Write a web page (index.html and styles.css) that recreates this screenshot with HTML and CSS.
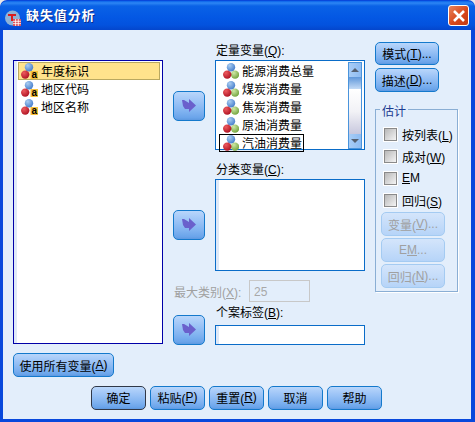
FILE: index.html
```html
<!DOCTYPE html>
<html lang="zh-CN">
<head>
<meta charset="utf-8">
<title>缺失值分析</title>
<link rel="stylesheet" href="styles.css">
</head>
<body>
<svg class="defs" width="0" height="0" aria-hidden="true">
  <defs>
    <radialGradient id="gb" cx="35%" cy="30%" r="80%"><stop offset="0" stop-color="#a9cdf2"/><stop offset="1" stop-color="#3f78c8"/></radialGradient>
    <radialGradient id="gr" cx="35%" cy="30%" r="80%"><stop offset="0" stop-color="#ee5a5e"/><stop offset="1" stop-color="#a80c1e"/></radialGradient>
    <radialGradient id="gg" cx="35%" cy="30%" r="80%"><stop offset="0" stop-color="#cfe8a6"/><stop offset="1" stop-color="#6a9e34"/></radialGradient>
    <symbol id="scale" viewBox="0 0 16 16">
      <circle cx="8" cy="4.2" r="4.2" fill="url(#gb)"/>
      <circle cx="12" cy="11.6" r="4.2" fill="url(#gg)"/>
      <circle cx="4.2" cy="11.6" r="4.2" fill="url(#gr)"/>
    </symbol>
    <symbol id="nominal" viewBox="0 0 17 16">
      <circle cx="8" cy="4.2" r="4.2" fill="url(#gb)"/>
      <circle cx="4.2" cy="11.6" r="4.2" fill="url(#gr)"/>
      <rect x="9.5" y="8" width="7.5" height="8" fill="#f8c33a"/>
      <text x="13.2" y="15" text-anchor="middle" class="a-glyph">a</text>
    </symbol>
    <symbol id="arrow" viewBox="0 0 14 14">
      <path d="M0 1 L2 1 L7 4 L7 0 L14 6.5 L7 13 L7 10 L3 10 L1 7 Z" fill="#6a60cc"/>
    </symbol>
  </defs>
</svg>

<div class="window">
  <header class="titlebar">
    <svg class="title-icon" width="16" height="16" viewBox="0 0 16 16" aria-hidden="true">
      <circle cx="7.5" cy="8" r="7.5" fill="#8fb2d6"/>
      <path d="M3 4h8v2H8v5H6V6H3z" fill="#d81c20"/>
      <rect x="8" y="9" width="8" height="7" fill="#d8505a"/>
      <path d="M8 11.3h8M8 13.6h8M10.6 9v7M13.3 9v7" stroke="#fff" stroke-width=".8"/>
    </svg>
    <h1 class="title">缺失值分析</h1>
    <button class="close" aria-label="关闭">
      <svg width="14" height="14" viewBox="0 0 14 14"><path d="M2 2 L12 12 M12 2 L2 12" stroke="#fff" stroke-width="2.6"/></svg>
    </button>
  </header>

  <main class="client">
    <div class="main">
      <section class="col-left">
        <div class="list list-source">
          <div class="row row-selected"><svg class="ico-n"><use href="#nominal"/></svg><span>年度标识</span></div>
          <div class="row"><svg class="ico-n"><use href="#nominal"/></svg><span>地区代码</span></div>
          <div class="row"><svg class="ico-n"><use href="#nominal"/></svg><span>地区名称</span></div>
        </div>
        <button class="btn btn-useall">使用所有变量(<u>A</u>)</button>
      </section>

      <section class="col-arrows">
        <button class="btn arrow arrow-1" aria-label="移入定量变量"><svg width="14" height="14"><use href="#arrow"/></svg></button>
        <button class="btn arrow arrow-2" aria-label="移入分类变量"><svg width="14" height="14"><use href="#arrow"/></svg></button>
        <button class="btn arrow arrow-3" aria-label="移入个案标签"><svg width="14" height="14"><use href="#arrow"/></svg></button>
      </section>

      <section class="col-mid">
        <div class="label">定量变量(<u>Q</u>):</div>
        <div class="list list-quant">
          <div class="items">
            <div class="row2"><svg class="ico-s"><use href="#scale"/></svg><span>能源消费总量</span></div>
            <div class="row2"><svg class="ico-s"><use href="#scale"/></svg><span>煤炭消费量</span></div>
            <div class="row2"><svg class="ico-s"><use href="#scale"/></svg><span>焦炭消费量</span></div>
            <div class="row2"><svg class="ico-s"><use href="#scale"/></svg><span>原油消费量</span></div>
            <div class="row2 row-focus"><svg class="ico-s"><use href="#scale"/></svg><span>汽油消费量</span></div>
          </div>
          <div class="scrollbar">
            <div class="sb-btn"><i class="tri-up"></i></div>
            <div class="sb-thumb"></div>
            <div class="sb-track"></div>
            <div class="sb-btn"><i class="tri-down"></i></div>
          </div>
        </div>
        <div class="label label-cat">分类变量(<u>C</u>):</div>
        <div class="list list-cat"></div>
        <div class="maxrow">
          <span class="maxlabel">最大类别(<u>X</u>):</span>
          <input class="maxinput" value="25" disabled>
        </div>
        <div class="label label-case">个案标签(<u>B</u>):</div>
        <div class="case-input"></div>
      </section>

      <section class="col-right">
        <button class="btn btn-side btn-mode">模式(<u>T</u>)...</button>
        <button class="btn btn-side btn-desc">描述(<u>D</u>)...</button>
        <fieldset class="group">
          <legend class="legend">估计</legend>
          <label class="check"><input type="checkbox"><span>按列表(<u>L</u>)</span></label>
          <label class="check"><input type="checkbox"><span>成对(<u>W</u>)</span></label>
          <label class="check"><input type="checkbox"><span><u>E</u>M</span></label>
          <label class="check"><input type="checkbox"><span>回归(<u>S</u>)</span></label>
          <button class="btn btn-dis btn-dis-first">变量(<u>V</u>)...</button>
          <button class="btn btn-dis">E<u>M</u>...</button>
          <button class="btn btn-dis">回归(<u>N</u>)...</button>
        </fieldset>
      </section>
    </div>

    <footer class="footer">
      <button class="btn btn-foot btn-default">确定</button>
      <button class="btn btn-foot">粘贴(<u>P</u>)</button>
      <button class="btn btn-foot">重置(<u>R</u>)</button>
      <button class="btn btn-foot">取消</button>
      <button class="btn btn-foot">帮助</button>
    </footer>
  </main>
</div>
</body>
</html>
```

FILE: styles.css
```css
* { box-sizing: border-box; }

html, body {
  margin: 0;
  padding: 0;
  background: #e8e8e8;
}

body {
  width: 475px;
  height: 422px;
  overflow: hidden;
  font-family: "Liberation Sans", "Noto Sans CJK SC", sans-serif;
  font-size: 12px;
  color: #000;
}

.defs { display: block; height: 0; }

.a-glyph {
  font-family: "Liberation Sans", sans-serif;
  font-size: 10px;
  font-weight: 700;
  fill: #000;
}

.window {
  width: 475px;
  height: 422px;
  display: flex;
  flex-direction: column;
  background: #0848dc;
  border-radius: 7px 7px 0 0;
  padding-top: 1px;
}

/* title bar */
.titlebar {
  height: 29px;
  flex: none;
  display: flex;
  align-items: center;
  padding: 0 6px 0 5px;
  border-radius: 7px 7px 0 0;
  background: linear-gradient(#0a63ea 0, #2d86f4 2px, #0a62e6 5px, #0458e4 16px, #0352de 24px, #0446cc 29px);
}

.title-icon { flex: none; margin-top: 4px; }

.title {
  margin: 0 0 0 5px;
  flex: 1;
  font-size: 13px;
  font-weight: 700;
  letter-spacing: .9px;
  color: #fff;
  text-shadow: 1px 1px 0 #0a2c8c;
  line-height: 18px;
}

.close {
  width: 21px;
  height: 21px;
  padding: 0;
  display: flex;
  align-items: center;
  justify-content: center;
  border: 1px solid #fff;
  border-radius: 3px;
  background: linear-gradient(135deg, #e8845c, #d8481c 55%, #c23a12);
}

/* client */
.client {
  flex: 1;
  margin: 0 4px 3px 3px;
  background: #e3eefb;
  padding: 12px 0 0 10px;
  display: flex;
  flex-direction: column;
}

.main {
  display: flex;
  gap: 10px;
  height: 335px;
}

/* buttons */
.btn {
  display: flex;
  align-items: center;
  justify-content: center;
  padding: 0;
  margin: 0;
  font: inherit;
  color: #000;
  border: 1px solid #1479cc;
  border-radius: 5px;
  background: linear-gradient(#b9d6fb 0, #a0c6f7 30%, #7fb2f0 70%, #6aa4ea 92%, #5d98e0 100%);
}

.btn u { text-underline-offset: 1px; }

/* left column */
.col-left {
  width: 150px;
  flex: none;
  padding-top: 18px;
}

.list {
  background: #fff;
  border: 1px solid #0a6cc8;
}

.list-source {
  height: 284px;
  border-color: #0000a8;
  padding: 1px 2px 0 4px;
  box-shadow: inset 3px 0 0 #dfe9f8;
}

.row {
  height: 18px;
  display: flex;
  align-items: center;
  gap: 3px;
  padding-left: 2px;
  border: 1px solid transparent;
}

.row span, .row2 span { margin-bottom: 2px; }

.row-selected {
  background: #ffe38c;
  border-color: #b9a860;
}

.ico-n { width: 17px; height: 16px; flex: none; }
.ico-s { width: 16px; height: 16px; flex: none; }

.btn-useall {
  width: 101px;
  height: 24px;
  margin-top: 9px;
}

/* arrow column */
.col-arrows {
  width: 32px;
  flex: none;
  display: flex;
  flex-direction: column;
}

.arrow { width: 32px; height: 30px; flex: none; }
.arrow-1 { margin-top: 49px; }
.arrow-2 { margin-top: 89px; }
.arrow-3 { margin-top: 75px; }

/* middle column */
.col-mid {
  width: 150px;
  flex: none;
  display: flex;
  flex-direction: column;
}

.label {
  height: 18px;
  line-height: 18px;
  padding-left: 1px;
}

.label-cat { margin-top: 11px; }
.label-case { margin-top: 2px; }

.list-quant {
  height: 90px;
  display: flex;
  padding: 1px 2px 0 3px;
}

.items { flex: 1; min-width: 0; }

.row2 {
  width: fit-content;
  height: 18px;
  display: flex;
  align-items: center;
  gap: 3px;
  padding-left: 3px;
  padding-right: 1px;
  border: 1px solid transparent;
}

.row-focus { border-color: #000; }

.scrollbar {
  width: 14px;
  flex: none;
  height: 87px;
  display: flex;
  flex-direction: column;
  border: 1px solid #4a94dc;
  background: #fff;
}

.sb-btn {
  height: 14px;
  flex: none;
  display: flex;
  align-items: center;
  justify-content: center;
  background: linear-gradient(90deg, #a8cdf6, #8ebcf2);
}

.tri-up, .tri-down {
  width: 0;
  height: 0;
  border-left: 4px solid transparent;
  border-right: 4px solid transparent;
}

.tri-up { border-bottom: 4px solid #556070; }
.tri-down { border-top: 4px solid #556070; }

.sb-thumb {
  height: 12px;
  flex: none;
  background: linear-gradient(#5f97da, #c4dbf6);
}

.sb-track {
  flex: 1;
  background: linear-gradient(#ffffff, #f2f2f6 50%, #c8c8de);
}

.list-cat {
  height: 92px;
  box-shadow: inset 3px 0 0 #dfe9f8;
}

.maxrow {
  height: 22px;
  margin-top: 9px;
  margin-left: -41px;
  display: flex;
  align-items: center;
}

.maxlabel {
  width: 75px;
  flex: none;
  color: #a0a0a0;
}

.maxinput {
  width: 61px;
  height: 22px;
  padding: 2px 0 0 4px;
  font: inherit;
  color: #a8a8a8;
  background: #e3eefb;
  border: 1px solid #c8c8c8;
}

.case-input {
  height: 20px;
  margin-top: 3px;
  background: #fff;
  border: 1px solid #0a6cc8;
  box-shadow: inset 3px 0 0 #dfe9f8;
}

/* right column */
.col-right {
  width: 83px;
  flex: none;
  display: flex;
  flex-direction: column;
}

.btn-side { width: 64px; flex: none; }
.btn-mode { height: 23px; }
.btn-desc { height: 24px; margin-top: 3px; }

.group {
  margin: 11px 0 0;
  padding: 8px 0 0 8px;
  min-width: 0;
  height: 189px;
  border: 1px solid #8aaed4;
  box-shadow: 1px 1px 0 #fff;
}

.legend {
  margin-left: -4px;
  padding: 0 2px;
  height: 12px;
  line-height: 18px;
  color: #1c3c90;
}

.check {
  height: 22px;
  display: flex;
  align-items: center;
  gap: 5px;
  white-space: nowrap;
}

.check input {
  appearance: none;
  width: 13px;
  height: 13px;
  margin: 0;
  flex: none;
  border: 1px solid #8a8a8a;
  outline: 1px solid #fff;
  background: linear-gradient(135deg, #b8b8b8, #f4f4f4);
}

.btn-dis {
  width: 64px;
  height: 24px;
  margin: 0 0 2px -3px;
  color: #a0a0a0;
  border-color: #a4cbf2;
  background: linear-gradient(#d4e5fb, #b6d4f8);
}

.btn-dis-first { margin-top: 1px; }

/* footer */
.footer {
  display: flex;
  gap: 4px;
  margin-top: 9px;
  padding-left: 78px;
}

.btn-foot { width: 55px; height: 24px; padding-bottom: 2px; }

.btn-default { border-color: #303848; }
```
